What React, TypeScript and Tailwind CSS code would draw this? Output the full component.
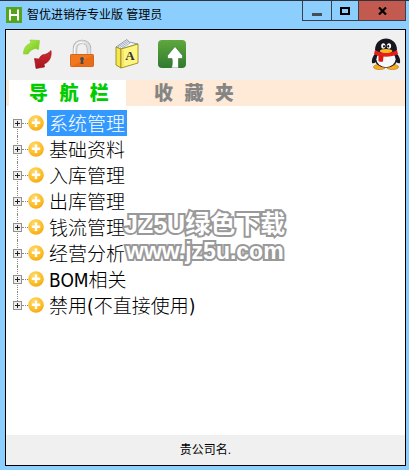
import { useState } from "react";

const TREE_ITEMS = [
  "系统管理",
  "基础资料",
  "入库管理",
  "出库管理",
  "钱流管理",
  "经营分析",
  "BOM相关",
  "禁用(不直接使用)",
];

const TABS = ["导 航 栏", "收 藏 夹"];

const RefreshIcon = () => (
  <svg viewBox="0 0 30 32" className="h-8 w-[30px]">
    <defs>
      <linearGradient id="greenArrow" x1="0" y1="0" x2="1" y2="1">
        <stop offset="0" stopColor="#b9ee55" />
        <stop offset="1" stopColor="#6cc512" />
      </linearGradient>
      <linearGradient id="redArrow" x1="0" y1="0" x2="0" y2="1">
        <stop offset="0" stopColor="#cf2b35" />
        <stop offset="1" stopColor="#a8141c" />
      </linearGradient>
    </defs>
    <path
      d="M1.5 16 C1.5 10 4.5 6.5 9 5 L8 2 L17.5 2.5 L16.5 11.5 L13.5 10.5 C10.5 11 7.5 13 6 16 Z"
      fill="url(#greenArrow)"
      stroke="#86cc2c"
      strokeWidth="0.6"
    />
    <path
      d="M29 12.5 C30 19 27 24.5 22 26 L22.5 29 L14 30.5 L12.5 20.5 L17 21 C18 18.5 20 16.5 22.5 16.5 C25 16 27 14.5 29 12.5 Z"
      fill="url(#redArrow)"
      stroke="#94131a"
      strokeWidth="0.6"
    />
  </svg>
);

const LockIcon = () => (
  <svg viewBox="0 0 24 30" className="h-[30px] w-6">
    <path d="M5 16 V10 C5 0.5 19 0.5 19 10 V16" fill="none" stroke="#a5a8aa" strokeWidth="4.4" />
    <path d="M5 16 V10 C5 0.5 19 0.5 19 10 V16" fill="none" stroke="#dcdedf" strokeWidth="3.2" />
    <path d="M4.4 15 V10 C4.6 3.5 11 2.6 14 4.2" fill="none" stroke="#fff" strokeWidth="1" />
    <rect x="0.5" y="15.5" width="23" height="12" rx="0.8" fill="#f07a22" stroke="#d9641a" />
    <path d="M1 27.5 L23 16 V28 H1 Z" fill="#e56410" opacity="0.6" />
    <circle cx="12" cy="20" r="1.9" fill="#4d4848" />
    <path d="M11.2 21 H12.8 L13.6 25 H10.4 Z" fill="#4d4848" />
  </svg>
);

const BookIcon = () => (
  <svg viewBox="0 0 24 32" className="h-8 w-6">
    <path d="M1 9 L12 1.5 L14 4 L23 6 L6 11 Z" fill="#f4f7fa" stroke="#78869a" strokeWidth="0.8" />
    <path d="M3 9 L12.5 3 M5 9.5 L13.5 4 M7 10 L15 5" stroke="#8192a8" strokeWidth="0.7" />
    <path d="M1 9 L6 11 V30 L1 27 Z" fill="#f5e650" stroke="#9b8a16" strokeWidth="0.9" />
    <path d="M6 11 L23 6 V25 L6 30 Z" fill="#fff681" stroke="#9b8a16" strokeWidth="0.9" />
    <path d="M8 11.5 V28.5" stroke="#e0cf48" strokeWidth="0.8" />
    <text
      x="15"
      y="22"
      textAnchor="middle"
      fontFamily="Liberation Serif, serif"
      fontWeight="bold"
      fontSize="13"
      fill="#333"
    >
      A
    </text>
  </svg>
);

const UpIcon = () => (
  <svg viewBox="0 0 28 28" className="size-7">
    <defs>
      <linearGradient id="upTile" x1="0" y1="0" x2="0" y2="1">
        <stop offset="0" stopColor="#5fa83c" />
        <stop offset="1" stopColor="#2f7a30" />
      </linearGradient>
    </defs>
    <rect width="28" height="28" rx="4" fill="url(#upTile)" />
    <path
      d="M17 6.5 L24.5 15.5 V18.5 H20.5 V28 H13.5 C14.5 24 14.5 21 14 18.5 H9.5 V15.5 Z"
      fill="#fff"
      stroke="#286e28"
      strokeWidth="0.6"
    />
  </svg>
);

const PenguinIcon = () => (
  <svg viewBox="0 0 30 32" className="h-8 w-[30px]">
    <ellipse cx="8.5" cy="29" rx="6" ry="2.6" fill="#f9a91b" stroke="#b86a08" strokeWidth="0.6" />
    <ellipse cx="21.5" cy="29" rx="6" ry="2.6" fill="#f9a91b" stroke="#b86a08" strokeWidth="0.6" />
    <path d="M6 14 C2 17 0.5 21 1 25 C3 26 5.5 24 7 21 Z" fill="#171720" />
    <path d="M24 14 C28 17 29.5 21 29 25 C27 26 24.5 24 23 21 Z" fill="#171720" />
    <ellipse cx="15" cy="20" rx="11.6" ry="9.8" fill="#171720" />
    <ellipse cx="15" cy="21.2" rx="9.6" ry="8" fill="#f7f8fb" />
    <path d="M4 12 C4 -3.5 26 -3.5 26 12 C24 17 6 17 4 12 Z" fill="#171720" />
    <ellipse cx="12.3" cy="8" rx="2.1" ry="2.8" fill="#fff" />
    <ellipse cx="18" cy="8" rx="2.1" ry="2.8" fill="#fff" />
    <ellipse cx="13" cy="8.2" rx="0.9" ry="1.3" fill="#111" />
    <ellipse cx="17.3" cy="8.2" rx="0.9" ry="1.3" fill="#111" />
    <path d="M4 12 C10 16 20 16 26 12 L27 16 C20 19.5 10 19.5 3 16 Z" fill="#e5201b" />
    <path d="M7.5 17 L12.5 18 L12 23.5 C10.5 24 9 24 7.5 23 Z" fill="#d91912" />
    <ellipse cx="15.1" cy="13" rx="6.3" ry="2" fill="#ffb81e" />
  </svg>
);

const PlusBall = () => (
  <svg viewBox="0 0 16 16" className="size-4 shrink-0">
    <defs>
      <radialGradient id="ball" cx="0.4" cy="0.3" r="0.75">
        <stop offset="0" stopColor="#ffdc6b" />
        <stop offset="0.7" stopColor="#fcbb25" />
        <stop offset="1" stopColor="#f3a50f" />
      </radialGradient>
    </defs>
    <circle cx="8" cy="8" r="7.8" fill="url(#ball)" />
    <path d="M8 3.5 V12 M3.8 7.8 H12.2" stroke="#fff" strokeWidth="2.4" />
  </svg>
);

const ExpandBox = () => (
  <svg viewBox="0 0 9 9" className="size-[9px] shrink-0" shapeRendering="crispEdges">
    <rect x="0.5" y="0.5" width="8" height="8" fill="#eee" stroke="#919191" />
    <path d="M2 4.5 H7 M4.5 2 V7" stroke="#222" />
  </svg>
);

const TOOLS = [
  { label: "刷新", icon: <RefreshIcon /> },
  { label: "锁定", icon: <LockIcon /> },
  { label: "字典", icon: <BookIcon /> },
  { label: "上传", icon: <UpIcon /> },
];

const TitleBar = () => (
  <header className="flex h-7 items-start justify-between border-t border-[#30323c]">
    <div className="flex h-7 items-center gap-1 pl-[6px]">
      <svg viewBox="0 0 16 16" className="size-4">
        <rect width="16" height="16" fill="#55a51c" />
        <path d="M4 2.5 V13.5 M12 2.5 V13.5 M4 8 H12" stroke="#fff" strokeWidth="2" />
      </svg>
      <h1 className="pl-px text-xs whitespace-nowrap text-black">智优进销存专业版 管理员</h1>
    </div>
    <div className="mr-[3px] flex h-5 border-x border-b border-[#35404a]">
      <button aria-label="最小化" className="flex w-7 items-end justify-center pb-1">
        <svg viewBox="0 0 10 3" className="h-[3px] w-[10px]" shapeRendering="crispEdges">
          <rect width="10" height="3" fill="#454d55" />
        </svg>
      </button>
      <button
        aria-label="最大化"
        className="flex w-[27px] items-center justify-center border-l border-[#35404a]"
      >
        <svg viewBox="0 0 10 8" className="h-2 w-[10px]" shapeRendering="crispEdges">
          <rect x="1" y="1" width="8" height="6" fill="none" stroke="#000" strokeWidth="2" />
        </svg>
      </button>
      <button
        aria-label="关闭"
        className="flex w-[47px] items-center justify-center border-l border-[#35404a] bg-[#c35a50]"
      >
        <svg viewBox="0 0 9 8" className="h-2 w-[9px]">
          <path d="M1 0.5 L8 7.5 M8 0.5 L1 7.5" stroke="#000" strokeWidth="2.2" />
        </svg>
      </button>
    </div>
  </header>
);

const App = () => {
  const [activeTab, setActiveTab] = useState(0);
  const [selected, setSelected] = useState(0);

  return (
    <div className="flex min-h-screen flex-col bg-[#8ccfff] font-['Liberation_Sans','Noto_Sans_CJK_SC',sans-serif]">
      <TitleBar />

      <main className="mt-px mr-[3px] mb-1 ml-[5px] flex flex-1 flex-col border border-black bg-white">
        {/* Toolbar */}
        <div className="flex h-[50px] items-center justify-between bg-[#f0f0f0] pr-1 pb-[2px] pl-4">
          <div className="flex items-center gap-[15px]">
            {TOOLS.map((tool) => (
              <button
                key={tool.label}
                aria-label={tool.label}
                className="flex w-[30px] items-center justify-center"
              >
                {tool.icon}
              </button>
            ))}
          </div>
          <button aria-label="在线客服">
            <PenguinIcon />
          </button>
        </div>

        {/* Tabs */}
        <div
          role="tablist"
          className="flex h-[26px] bg-[#ffead7] pl-[3px] font-['Liberation_Mono','Noto_Sans_CJK_SC',monospace] text-[19px] leading-[22px] font-black"
        >
          {TABS.map((tab, index) => (
            <button
              key={tab}
              role="tab"
              aria-selected={index === activeTab}
              onClick={() => setActiveTab(index)}
              className={`w-[117px] pt-1 pl-5 text-left whitespace-nowrap ${
                index === activeTab
                  ? "bg-white text-[#00cc00]"
                  : "ml-2 bg-[#ffead7] text-[#858585]"
              }`}
            >
              {tab}
            </button>
          ))}
        </div>

        <div className="relative flex-1 pt-1">
          <ul role="tree" className="font-['DejaVu_Sans_Condensed','Noto_Sans_CJK_SC',sans-serif] text-[19px]">
            {TREE_ITEMS.map((item, index) => (
              <li
                key={item}
                role="treeitem"
                aria-selected={index === selected}
                className="relative flex h-[26px] items-center pl-[7px]"
              >
                <span
                  className={`absolute left-[11px] border-l border-dotted border-[#888] ${
                    index === 0 ? "top-1/2" : "top-0"
                  } ${index === TREE_ITEMS.length - 1 ? "bottom-1/2" : "bottom-0"}`}
                />
                <span className="relative flex">
                  <ExpandBox />
                </span>
                <span className="w-[6px] border-t border-dotted border-[#888]" />
                <PlusBall />
                <button
                  onClick={() => setSelected(index)}
                  className={`ml-[3px] h-[26px] px-[2px] leading-7 font-light whitespace-nowrap ${
                    index === selected ? "bg-[#3399ff] text-white" : "text-black"
                  }`}
                >
                  {item}
                </button>
              </li>
            ))}
          </ul>

          {/* Watermark */}
          <div className="pointer-events-none absolute top-[103px] left-[118px] font-bold whitespace-nowrap text-white [-webkit-text-stroke:4px_#999] [paint-order:stroke_fill]">
            <p className="text-[25px] leading-[30px]">JZ5U绿色下载</p>
            <p className="pl-[2px] text-[23px] leading-6">www.jz5u.com</p>
          </div>
        </div>

        <footer className="flex h-[30px] items-center justify-center bg-[#f0f0f0] text-xs text-black">
          贵公司名.
        </footer>
      </main>
    </div>
  );
};

export default App;
